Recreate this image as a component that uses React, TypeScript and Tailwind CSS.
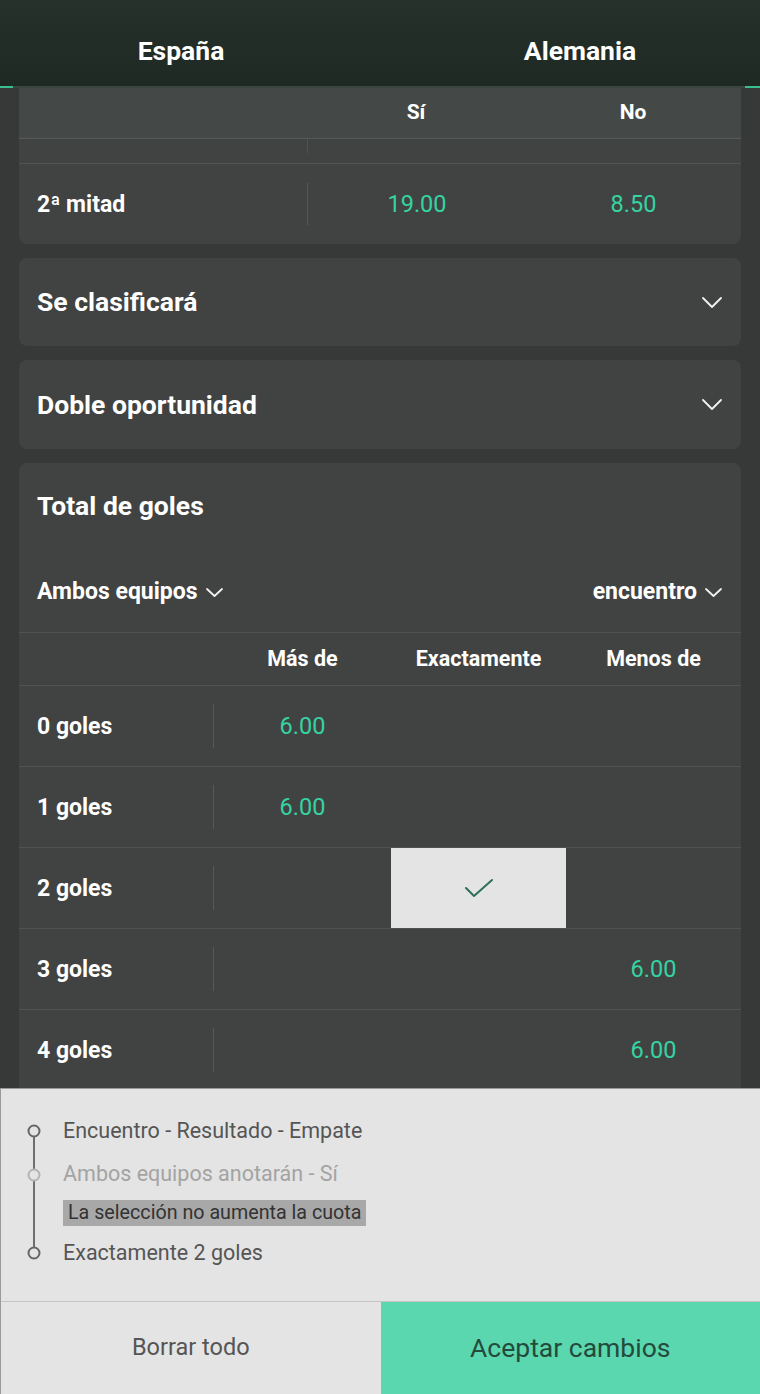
import React from "react";

const F = { fontFamily: "Roboto, 'Liberation Sans', sans-serif" };

function Chevron({ w = 20, h = 11, cls = "" }: { w?: number; h?: number; cls?: string }) {
  return (
    <svg width={w} height={h} viewBox={`0 0 ${w} ${h}`} className={cls} fill="none">
      <path d={`M1 1 L${w / 2} ${h - 1} L${w - 1} 1`} stroke="#f2f2f2" strokeWidth="1.8" strokeLinecap="round" strokeLinejoin="round" />
    </svg>
  );
}

function Odd({ v }: { v: string }) {
  return <span className="text-[23.5px] text-[#35d3a2]">{v}</span>;
}

function GoalRow({ label, mas, exact, menos, selected }: { label: string; mas?: string; exact?: string; menos?: string; selected?: boolean }) {
  return (
    <div className="flex h-[81px] border-t border-[#4f5351]">
      <div className="w-[194px] flex items-center pl-[18px] pt-[3px]">
        <span className="text-[23px] font-bold text-white">{label}</span>
      </div>
      <div className="flex items-center">
        <div className="w-px h-[44px] bg-[#565958]" />
      </div>
      <div className="w-[177px] flex items-center justify-center pt-[2px]">{mas && <Odd v={mas} />}</div>
      <div className={`w-[175px] flex items-center justify-center ${selected ? "bg-[#e4e4e4]" : ""}`}>
        {selected ? (
          <svg width="30" height="20" viewBox="0 0 30 20" fill="none">
            <path d="M2 10 L10 18 L28 2" stroke="#2f6f58" strokeWidth="2" strokeLinecap="round" strokeLinejoin="round" />
          </svg>
        ) : exact ? (
          <Odd v={exact} />
        ) : null}
      </div>
      <div className="flex-1 flex items-center justify-center pt-[2px]">{menos && <Odd v={menos} />}</div>
    </div>
  );
}

export default function App() {
  return (
    <div style={F} className="w-[760px] h-[1394px] flex flex-col overflow-hidden bg-[#373938]">
      {/* Header */}
      <div className="h-[86px] shrink-0 flex bg-gradient-to-b from-[#27312b] to-[#1e2923]">
        <div className="w-1/2 pr-[18px] flex items-center justify-center pt-[16px]">
          <span className="text-[26.5px] font-bold text-white">España</span>
        </div>
        <div className="w-1/2 pl-[20px] flex items-center justify-center pt-[16px]">
          <span className="text-[26.5px] font-bold text-white">Alemania</span>
        </div>
      </div>
      <div className="h-[2px] shrink-0 flex">
        <div className="w-[13px] bg-[#3bbf8f]" />
        <div className="flex-1 bg-[#3a4541]" />
        <div className="w-[15px] bg-[#3bbf8f]" />
      </div>

      {/* Content */}
      <div className="flex-1 overflow-hidden px-[19px] flex flex-col gap-[14px]">
        {/* Card 1 */}
        <div className="shrink-0 bg-[#414342] rounded-b-[8px] overflow-hidden">
          <div className="h-[50px] flex bg-[#444947]">
            <div className="w-[288px]" />
            <div className="w-[218px] flex items-center justify-center">
              <span className="text-[21px] font-bold text-white">Sí</span>
            </div>
            <div className="flex-1 flex items-center justify-center">
              <span className="text-[21px] font-bold text-white">No</span>
            </div>
          </div>
          <div className="h-[25px] flex border-t border-[#555957] bg-[#414342]">
            <div className="w-[288px]" />
            <div className="w-px h-[14px] bg-[#505352]" />
          </div>
          <div className="h-[81px] flex border-t border-[#515453]">
            <div className="w-[288px] flex items-center pl-[18px] pt-[3px]">
              <span className="text-[23px] font-bold text-white">2ª mitad</span>
            </div>
            <div className="flex items-center">
              <div className="w-px h-[42px] bg-[#565958]" />
            </div>
            <div className="w-[218px] flex items-center justify-center pt-[2px]">
              <Odd v="19.00" />
            </div>
            <div className="flex-1 flex items-center justify-center pt-[2px]">
              <Odd v="8.50" />
            </div>
          </div>
        </div>

        {/* Card 2 */}
        <div className="shrink-0 h-[88px] bg-[#414342] rounded-[8px] flex items-center justify-between pl-[18px] pr-[19px]">
          <span className="text-[26.5px] font-bold text-white">Se clasificará</span>
          <Chevron />
        </div>

        {/* Card 3 */}
        <div className="shrink-0 h-[89px] bg-[#414342] rounded-[8px] flex items-center justify-between pl-[18px] pr-[19px]">
          <span className="text-[26.5px] font-bold text-white">Doble oportunidad</span>
          <Chevron />
        </div>

        {/* Card 4 */}
        <div className="shrink-0 bg-[#414342] rounded-t-[8px]">
          <div className="h-[84px] flex items-center pl-[18px] pt-[1px]">
            <span className="text-[26.5px] font-bold text-white">Total de goles</span>
          </div>
          <div className="h-[85px] flex items-center justify-between pl-[18px] pr-[19px] pt-[5px]">
            <div className="flex items-center gap-[8px]">
              <span className="text-[23px] font-bold text-white">Ambos equipos</span>
              <Chevron w={17} h={9} />
            </div>
            <div className="flex items-center gap-[8px]">
              <span className="text-[23px] font-bold text-white">encuentro</span>
              <Chevron w={17} h={9} />
            </div>
          </div>
          <div className="h-[53px] flex border-t border-[#4f5351]">
            <div className="w-[195px]" />
            <div className="w-[177px] flex items-center justify-center">
              <span className="text-[21.5px] font-bold text-white">Más de</span>
            </div>
            <div className="w-[175px] flex items-center justify-center">
              <span className="text-[21.5px] font-bold text-white">Exactamente</span>
            </div>
            <div className="flex-1 flex items-center justify-center">
              <span className="text-[21.5px] font-bold text-white">Menos de</span>
            </div>
          </div>
          <GoalRow label="0 goles" mas="6.00" />
          <GoalRow label="1 goles" mas="6.00" />
          <GoalRow label="2 goles" selected />
          <GoalRow label="3 goles" menos="6.00" />
          <GoalRow label="4 goles" menos="6.00" />
        </div>
      </div>

      {/* Bottom sheet */}
      <div className="shrink-0 bg-[#e4e4e4] border-t border-[#9a9a9a] border-l border-l-[#9a9a9a]">
        <div className="relative pt-[20px] pb-[26px] pl-[62px]">
          <svg className="absolute left-0 top-[20px]" width="62" height="166" viewBox="0 0 62 166" fill="none">
            <line x1="33" y1="22" x2="33" y2="144" stroke="#6e6e6e" strokeWidth="2" />
            <circle cx="33" cy="22" r="5.5" fill="#e4e4e4" stroke="#666" strokeWidth="2" />
            <circle cx="33" cy="66" r="5.5" fill="#e4e4e4" stroke="#b4b4b4" strokeWidth="2" />
            <circle cx="33" cy="144" r="5.5" fill="#e4e4e4" stroke="#666" strokeWidth="2" />
          </svg>
          <div className="h-[44px] flex items-center text-[21.5px] text-[#555]">Encuentro - Resultado - Empate</div>
          <div className="h-[43px] flex items-center text-[21.5px] text-[#a3a3a3]">Ambos equipos anotarán - Sí</div>
          <div className="mt-[4px] h-[26px] flex items-center">
            <span className="bg-[#a8a8a8] text-[#333] text-[19.7px] px-[5px] h-[26px] leading-[26px]">La selección no aumenta la cuota</span>
          </div>
          <div className="mt-[5px] h-[44px] flex items-center text-[21.5px] text-[#555]">Exactamente 2 goles</div>
        </div>
        <div className="h-[93px] flex border-t border-[#c4c4c4]">
          <div className="w-1/2 flex items-center justify-center">
            <span className="text-[23.5px] text-[#555]">Borrar todo</span>
          </div>
          <div className="w-1/2 bg-[#5ad7af] flex items-center justify-center">
            <span className="text-[26.5px] text-[#244a3c]">Aceptar cambios</span>
          </div>
        </div>
      </div>
    </div>
  );
}
